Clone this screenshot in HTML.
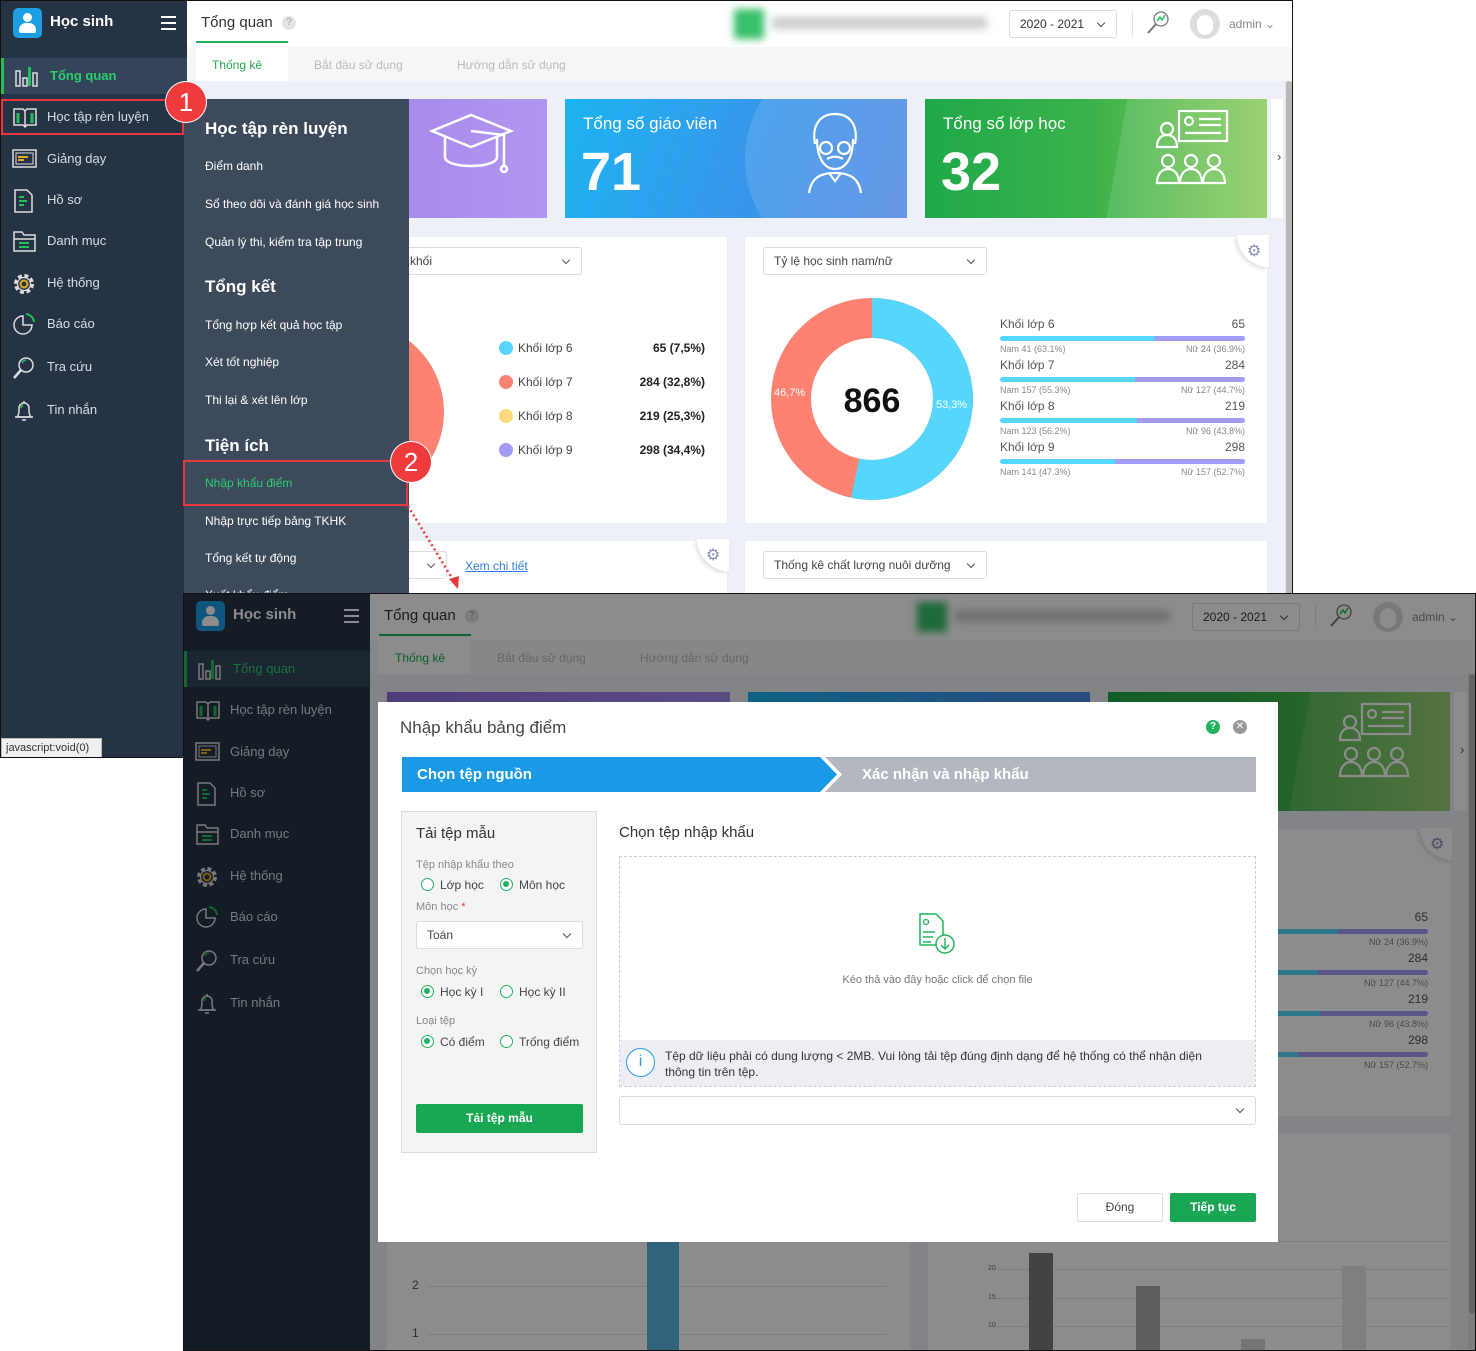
<!DOCTYPE html>
<html><head><meta charset="utf-8">
<style>
*{margin:0;padding:0;box-sizing:border-box}
body{width:1476px;height:1351px;position:relative;overflow:hidden;background:#fff;font-family:"Liberation Sans","DejaVu Sans",sans-serif;color:#333}
.a{position:absolute}
.app{position:absolute;width:1293px;height:758px;overflow:hidden;background:#eef0f7;border:1px solid #111}
.sb{position:absolute;left:0;top:0;width:186px;height:758px;background:#263345}
.sb .it{position:absolute;left:0;width:186px;height:36px;font-size:13px;color:#d8dee6;line-height:36px;padding-left:46px}
.sb .it svg{position:absolute;left:11px;top:7px}
.hdr{position:absolute;left:186px;top:0;width:1107px;height:46px;background:#fff}
.tabs{position:absolute;left:186px;top:46px;width:1107px;height:34px;background:#f6f6f8;font-size:12px;color:#bbb}
.card{position:absolute;top:98px;height:119px;overflow:hidden;color:#fff}
.pan{position:absolute;background:#fff}
.sel{position:absolute;border:1px solid #dcdcdc;border-radius:3px;background:#fff;font-size:12px;color:#444;padding-left:10px;line-height:26px}
.sel:after{content:"";position:absolute;right:12px;top:9px;width:5px;height:5px;border-right:1.5px solid #555;border-bottom:1.5px solid #555;transform:rotate(45deg)}
.fl{position:absolute;left:183px;top:98px;width:225px;height:660px;background:#3d4a5c;color:#fff}
.fl .h{position:absolute;left:21px;font-size:17px;font-weight:bold}
.fl .i{position:absolute;left:21px;font-size:12px}
.badge{position:absolute;width:40px;height:40px;border-radius:50%;background:#ef3b3b;color:#fff;font-size:26px;text-align:center;line-height:40px;box-shadow:0 0 0 1px #fff}
.rad{position:absolute;width:13px;height:13px;border:1.5px solid #22b35e;border-radius:50%;background:#fff}
.rad.on:after{content:"";position:absolute;left:2px;top:2px;width:6px;height:6px;border-radius:50%;background:#22b35e}
.lbl{position:absolute;font-size:12px;color:#444}
.sm{position:absolute;font-size:11px;color:#888}
</style></head><body>

<!-- ================= FRAME 1 ================= -->
<div class="app" style="left:0;top:0">
 <div class="sb">
  <div class="a" style="left:12px;top:7px;width:29px;height:30px;border-radius:5px;background:#1d9de2"><div class="a" style="left:10px;top:5px;width:9px;height:9px;border-radius:50%;background:#fff"></div><div class="a" style="left:6px;top:15px;width:17px;height:10px;border-radius:7px 7px 2px 2px;background:#fff"></div></div>
  <div class="a" style="left:49px;top:12px;font-size:15px;font-weight:bold;color:#fff">Học sinh</div>
  <div class="a" style="left:160px;top:15px;width:15px;height:2px;background:#fff;box-shadow:0 6px 0 #fff,0 12px 0 #fff"></div>
  <div class="it" style="top:57px;background:#34455a;border-left:3px solid #22c05a;color:#2ecc71;font-weight:bold"><svg width="24" height="22"><g fill="none" stroke="#ddd" stroke-width="1.5"><rect x="1" y="6" width="4" height="15"/><rect x="8" y="13" width="4" height="8"/><rect x="18" y="8" width="4" height="13"/></g><rect x="13" y="2" width="3" height="19" fill="#22c05a"/></svg>Tổng quan</div>
  <div class="it" style="top:98px"><svg width="26" height="22"><g fill="none" stroke="#ddd" stroke-width="1.5"><path d="M2 3h9l2 2 2-2h9v16h-9l-2 2-2-2H2z"/><path d="M13 5v16"/></g><path d="M6 7v10M20 7v10" stroke="#22c05a" stroke-width="3"/></svg>Học tập rèn luyện</div>
  <div class="it" style="top:140px"><svg width="26" height="22"><rect x="1" y="2" width="23" height="17" fill="none" stroke="#ddd" stroke-width="1.5"/><rect x="4" y="5" width="17" height="11" fill="none" stroke="#ddd"/><path d="M6 9h10M6 12h6" stroke="#e0b020" stroke-width="2"/></svg>Giảng dạy</div>
  <div class="it" style="top:181px"><svg width="26" height="24"><path d="M3 1h12l5 5v17H3z" fill="none" stroke="#ddd" stroke-width="1.5"/><path d="M7 8h5M7 12h8M7 16h5" stroke="#22c05a" stroke-width="2"/></svg>Hồ sơ</div>
  <div class="it" style="top:222px"><svg width="26" height="22"><path d="M2 2h8l2 3h11v16H2z" fill="none" stroke="#ddd" stroke-width="1.5"/><path d="M2 9h21" stroke="#ddd" stroke-width="1.5"/><path d="M7 13h10M7 17h10" stroke="#22c05a" stroke-width="2"/></svg>Danh mục</div>
  <div class="it" style="top:264px"><svg width="26" height="24"><circle cx="12" cy="12" r="8.5" fill="none" stroke="#ddd" stroke-width="3" stroke-dasharray="4 2.7"/><circle cx="12" cy="12" r="6.5" fill="none" stroke="#ddd" stroke-width="1.2"/><circle cx="12" cy="12" r="3.5" fill="none" stroke="#e0b020" stroke-width="2"/></svg>Hệ thống</div>
  <div class="it" style="top:305px"><svg width="26" height="24"><path d="M11 3a9 9 0 1 0 9 9h-9z" fill="none" stroke="#ddd" stroke-width="1.5"/><path d="M14 1a9 9 0 0 1 8 8" fill="none" stroke="#22c05a" stroke-width="2"/></svg>Báo cáo</div>
  <div class="it" style="top:348px"><svg width="26" height="24"><circle cx="14" cy="9" r="7" fill="none" stroke="#ddd" stroke-width="1.5"/><path d="M9 14l-7 8" stroke="#ddd" stroke-width="2.5"/><path d="M10 7a5 5 0 0 1 4-3" stroke="#22c05a" stroke-width="1.6" fill="none"/></svg>Tra cứu</div>
  <div class="it" style="top:391px"><svg width="26" height="24"><path d="M5 18c2-2 2-5 2-9a5 5 0 0 1 10 0c0 4 0 7 2 9z" fill="none" stroke="#ddd" stroke-width="1.5"/><path d="M3 18h18M10 21h4M12 2v2" stroke="#ddd" stroke-width="1.5"/><path d="M9 9a4 4 0 0 1 2-3" stroke="#22c05a" stroke-width="1.6" fill="none"/></svg>Tin nhắn</div>
  <div class="a" style="left:0;top:737px;width:101px;height:21px;background:#f0f0f0;border:1px solid #bbb;font-size:11px;color:#333;line-height:19px;padding-left:4px">javascript:void(0)</div>
 </div>
 <div class="hdr">
  <div class="a" style="left:14px;top:13px;font-size:15px">Tổng quan</div>
  <div class="a" style="left:95px;top:15px;width:14px;height:14px;border-radius:50%;background:#e4e4e4;color:#999;font-size:10px;text-align:center;line-height:14px">?</div>
  <div class="a" style="left:547px;top:8px;width:30px;height:30px;background:#39c06a;filter:blur(4px)"></div>
  <div class="a" style="left:585px;top:16px;width:215px;height:12px;background:#ccc;filter:blur(4px)"></div>
  <div class="sel" style="left:822px;top:9px;width:108px;height:28px;font-size:12px;color:#333">2020 - 2021</div>
  <div class="a" style="left:945px;top:10px;width:1px;height:26px;background:#e6e6e6"></div>
  <svg class="a" style="left:958px;top:9px" width="26" height="26"><circle cx="16" cy="9" r="7" fill="none" stroke="#777" stroke-width="1.3"/><path d="M11 14l-8 9" stroke="#777" stroke-width="2"/><path d="M12 11l3-4 2 3 3-5" stroke="#22c05a" stroke-width="1.5" fill="none"/></svg>
  <div class="a" style="left:1003px;top:8px;width:30px;height:30px;border-radius:50%;background:#ddd"><div class="a" style="left:7px;top:6px;width:16px;height:20px;border-radius:8px;background:#fff"></div></div>
  <div class="a" style="left:1042px;top:16px;font-size:12px;color:#888">admin ⌄</div>
 </div>
 <div class="tabs">
  <div class="a" style="left:9px;top:-6px;width:92px;height:40px;background:#fff;border-top:2px solid #22b35e"></div>
  <div class="a" style="left:25px;top:11px;color:#22a852">Thống kê</div>
  <div class="a" style="left:127px;top:11px">Bắt đầu sử dụng</div>
  <div class="a" style="left:270px;top:11px">Hướng dẫn sử dụng</div>
 </div>
 <div class="a" style="left:1284px;top:80px;width:8px;height:678px;background:#e4e4e4"><div class="a" style="left:1px;top:0;width:6px;height:640px;border-radius:3px;background:#b9b9b9"></div></div>
 <!-- cards -->
 <div class="card" style="left:203px;width:343px;background:linear-gradient(90deg,#8f6fe0,#a88af0)"><div class="a" style="left:140px;top:-40px;width:250px;height:200px;border-radius:50%;background:rgba(255,255,255,.1)"></div>
  <svg class="a" style="left:225px;top:12px" width="85" height="72"><g fill="none" stroke="#fff" stroke-width="2.5"><path d="M3 20L42 4l40 16-40 16z"/><path d="M16 26v20c0 12 52 12 52 0V26"/><path d="M42 20l33 4v30"/><circle cx="75" cy="58" r="3"/></g></svg></div>
 <div class="card" style="left:564px;width:342px;background:linear-gradient(110deg,#1cb3f2,#3a94e9 60%,#5389e2)"><div class="a" style="left:180px;top:-60px;width:260px;height:240px;border-radius:50%;background:rgba(255,255,255,.12)"></div>
  <div class="a" style="left:18px;top:15px;font-size:17px">Tổng số giáo viên</div><div class="a" style="left:16px;top:42px;font-size:54px;font-weight:bold">71</div>
  <svg class="a" style="left:240px;top:10px" width="60" height="85"><g fill="none" stroke="#fff" stroke-width="2.2"><path d="M10 35c-4-22 8-30 20-30s24 8 20 30"/><path d="M12 30c0 20 8 30 18 30s18-10 18-30"/><circle cx="21" cy="39" r="6"/><circle cx="39" cy="39" r="6"/><path d="M22 50c5-3 11-3 16 0M4 84c2-14 10-20 26-20s24 6 26 20M24 64l6 8 6-8"/></g></svg></div>
 <div class="card" style="left:924px;width:342px;background:linear-gradient(90deg,#1fa84a,#3cb34a 50%,#8dcc60)"><div class="a" style="left:190px;top:-10px;width:200px;height:160px;background:rgba(255,255,255,.12);transform:skewX(-10deg)"></div>
  <div class="a" style="left:18px;top:15px;font-size:17px">Tổng số lớp học</div><div class="a" style="left:16px;top:42px;font-size:54px;font-weight:bold">32</div>
  <svg class="a" style="left:230px;top:10px" width="76" height="76"><g fill="none" stroke="#fff" stroke-width="2.2"><rect x="24" y="2" width="48" height="30"/><circle cx="34" cy="12" r="4"/><path d="M44 10h22M44 16h22M30 24h36"/><circle cx="12" cy="20" r="6"/><path d="M2 38c0-8 4-12 10-12s10 4 10 12z"/><circle cx="13" cy="52" r="6"/><circle cx="36" cy="52" r="6"/><circle cx="59" cy="52" r="6"/><path d="M2 74c0-9 5-14 11-14s11 5 11 14zM25 74c0-9 5-14 11-14s11 5 11 14zM48 74c0-9 5-14 11-14s11 5 11 14z"/></g></svg></div>
 <div class="a" style="left:1270px;top:98px;width:12px;height:119px;background:#fff"></div>
 <div class="a" style="left:1276px;top:148px;font-size:13px;color:#555">›</div>
 <!-- panels -->
 <div class="pan" style="left:203px;top:236px;width:523px;height:286px;overflow:hidden">
  <div class="sel" style="left:195px;top:10px;width:183px;height:28px">khối</div>
  <div class="a" style="left:60px;top:85px;width:180px;height:180px;border-radius:50%;background:#fd8272"></div>
  <div class="a" style="left:295px;top:104px;width:14px;height:14px;border-radius:50%;background:#55d7fd"></div><div class="lbl" style="left:314px;top:104px">Khối lớp 6</div><div class="lbl" style="left:440px;top:104px;width:61px;text-align:right;font-weight:bold;color:#222">65 (7,5%)</div>
  <div class="a" style="left:295px;top:138px;width:14px;height:14px;border-radius:50%;background:#fd8272"></div><div class="lbl" style="left:314px;top:138px">Khối lớp 7</div><div class="lbl" style="left:420px;top:138px;width:81px;text-align:right;font-weight:bold;color:#222">284 (32,8%)</div>
  <div class="a" style="left:295px;top:172px;width:14px;height:14px;border-radius:50%;background:#ffd97a"></div><div class="lbl" style="left:314px;top:172px">Khối lớp 8</div><div class="lbl" style="left:420px;top:172px;width:81px;text-align:right;font-weight:bold;color:#222">219 (25,3%)</div>
  <div class="a" style="left:295px;top:206px;width:14px;height:14px;border-radius:50%;background:#a39cf4"></div><div class="lbl" style="left:314px;top:206px">Khối lớp 9</div><div class="lbl" style="left:420px;top:206px;width:81px;text-align:right;font-weight:bold;color:#222">298 (34,4%)</div>
 </div>
 <div class="pan" style="left:744px;top:236px;width:522px;height:286px">
  <div class="sel" style="left:18px;top:10px;width:224px;height:28px">Tỷ lệ học sinh nam/nữ</div>
  <div class="a" style="left:492px;top:-2px;width:32px;height:32px;border-radius:0 0 0 32px;background:#fff;box-shadow:-2px 2px 4px rgba(0,0,0,.12)"></div>
  <div class="a" style="left:502px;top:4px;font-size:16px;color:#8a8fb5">⚙</div>
  <svg class="a" style="left:26px;top:61px" width="204" height="204"><circle cx="101" cy="101" r="81" fill="none" stroke="#fd8272" stroke-width="40"/><circle cx="101" cy="101" r="81" fill="none" stroke="#55d7fd" stroke-width="40" stroke-dasharray="271.3 600" transform="rotate(-90 101 101)"/><text x="101" y="114" text-anchor="middle" font-size="34" font-weight="bold" fill="#111" font-family="Liberation Sans">866</text><text x="3" y="98" font-size="11" fill="#fff" font-family="Liberation Sans">46,7%</text><text x="165" y="110" font-size="11" fill="#fff" font-family="Liberation Sans">53,3%</text></svg>
  <div class="a" style="left:255px;top:80px;width:245px;font-size:12px;color:#555">
   <div style="height:41px;position:relative"><span>Khối lớp 6</span><span class="a" style="right:0">65</span><div class="a" style="top:19px;left:0;width:245px;height:5px;border-radius:3px;background:linear-gradient(90deg,#55d7fd 63%,#a39cf4 63%)"></div><div class="a" style="top:27px;left:0;width:245px;font-size:9px;color:#888">Nam 41 (63.1%)<span style="float:right">Nữ 24 (36.9%)</span></div></div>
   <div style="height:41px;position:relative"><span>Khối lớp 7</span><span class="a" style="right:0">284</span><div class="a" style="top:19px;left:0;width:245px;height:5px;border-radius:3px;background:linear-gradient(90deg,#55d7fd 55%,#a39cf4 55%)"></div><div class="a" style="top:27px;left:0;width:245px;font-size:9px;color:#888">Nam 157 (55.3%)<span style="float:right">Nữ 127 (44.7%)</span></div></div>
   <div style="height:41px;position:relative"><span>Khối lớp 8</span><span class="a" style="right:0">219</span><div class="a" style="top:19px;left:0;width:245px;height:5px;border-radius:3px;background:linear-gradient(90deg,#55d7fd 56%,#a39cf4 56%)"></div><div class="a" style="top:27px;left:0;width:245px;font-size:9px;color:#888">Nam 123 (56.2%)<span style="float:right">Nữ 96 (43.8%)</span></div></div>
   <div style="height:41px;position:relative"><span>Khối lớp 9</span><span class="a" style="right:0">298</span><div class="a" style="top:19px;left:0;width:245px;height:5px;border-radius:3px;background:linear-gradient(90deg,#55d7fd 47%,#a39cf4 47%)"></div><div class="a" style="top:27px;left:0;width:245px;font-size:9px;color:#888">Nam 141 (47.3%)<span style="float:right">Nữ 157 (52.7%)</span></div></div>
  </div>
 </div>
 <div class="pan" style="left:203px;top:540px;width:523px;height:218px">
  <div class="sel" style="left:40px;top:10px;width:203px;height:28px"></div>
  <div class="a" style="left:261px;top:18px;font-size:12px;color:#2f7de1;text-decoration:underline">Xem chi tiết</div>
  <div class="a" style="left:493px;top:-2px;width:32px;height:32px;border-radius:0 0 0 32px;background:#fff;box-shadow:-2px 2px 4px rgba(0,0,0,.12)"></div>
  <div class="a" style="left:502px;top:4px;font-size:16px;color:#8a8fb5">⚙</div>
  <div class="a" style="left:25px;top:144px;font-size:12px;color:#555">2</div><div class="a" style="left:25px;top:192px;font-size:12px;color:#555">1</div>
  <div class="a" style="left:40px;top:104px;width:460px;height:1px;background:#e5e5e5"></div><div class="a" style="left:40px;top:152px;width:460px;height:1px;background:#e5e5e5"></div><div class="a" style="left:40px;top:200px;width:460px;height:1px;background:#e5e5e5"></div>
  <div class="a" style="left:260px;top:100px;width:32px;height:118px;background:#5ab6de"></div>
 </div>
 <div class="pan" style="left:744px;top:540px;width:522px;height:218px">
  <div class="sel" style="left:18px;top:10px;width:224px;height:28px">Thống kê chất lượng nuôi dưỡng</div>
  <div class="a" style="left:65px;top:107px;width:455px;height:1px;background:#e5e5e5"></div><div class="a" style="left:65px;top:135px;width:455px;height:1px;background:#e5e5e5"></div><div class="a" style="left:65px;top:164px;width:455px;height:1px;background:#e5e5e5"></div><div class="a" style="left:65px;top:192px;width:455px;height:1px;background:#e5e5e5"></div>
  <div class="a" style="left:60px;top:103px;font-size:7px;color:#777">25</div><div class="a" style="left:60px;top:131px;font-size:7px;color:#777">20</div><div class="a" style="left:60px;top:160px;font-size:7px;color:#777">15</div><div class="a" style="left:60px;top:188px;font-size:7px;color:#777">10</div>
  <div class="a" style="left:101px;top:119px;width:24px;height:100px;background:#7a7a7a"></div>
  <div class="a" style="left:208px;top:152px;width:24px;height:70px;background:#aaa"></div>
  <div class="a" style="left:313px;top:205px;width:24px;height:20px;background:#d6d6d6"></div>
  <div class="a" style="left:414px;top:132px;width:24px;height:90px;background:#e3e8ea"></div>
 </div>
 <!-- flyout -->
 <div class="fl">
  <div class="h" style="top:20px">Học tập rèn luyện</div>
  <div class="i" style="top:60px">Điểm danh</div>
  <div class="i" style="top:98px">Sổ theo dõi và đánh giá học sinh</div>
  <div class="i" style="top:136px">Quản lý thi, kiểm tra tập trung</div>
  <div class="h" style="top:178px">Tổng kết</div>
  <div class="i" style="top:219px">Tổng hợp kết quả học tập</div>
  <div class="i" style="top:256px">Xét tốt nghiệp</div>
  <div class="i" style="top:294px">Thi lại &amp; xét lên lớp</div>
  <div class="h" style="top:337px">Tiện ích</div>
  <div class="i" style="top:377px;color:#2ecc71">Nhập khẩu điểm</div>
  <div class="i" style="top:415px">Nhập trực tiếp bảng TKHK</div>
  <div class="i" style="top:452px">Tổng kết tự động</div>
  <div class="i" style="top:489px">Xuất khẩu điểm</div>
 </div>
 <div class="a" style="left:0;top:98px;width:183px;height:36px;border:2px solid #e8383d"></div>
 <div class="a" style="left:182px;top:459px;width:225px;height:46px;border:2px solid #e8383d"></div>
 <div class="badge" style="left:165px;top:81px">1</div>
 <div class="badge" style="left:390px;top:441px">2</div>
 <svg class="a" style="left:404px;top:502px" width="60" height="90"><path d="M3 3L50 80" stroke="#e8383d" stroke-width="2.5" stroke-dasharray="2 3"/><path d="M44 76l9 10 1-13z" fill="#e8383d"/></svg>
</div>

<!-- ================= FRAME 2 ================= -->
<div class="app" style="left:183px;top:593px">
 <div class="sb">
  <div class="a" style="left:12px;top:7px;width:29px;height:30px;border-radius:5px;background:#1d9de2"><div class="a" style="left:10px;top:5px;width:9px;height:9px;border-radius:50%;background:#fff"></div><div class="a" style="left:6px;top:15px;width:17px;height:10px;border-radius:7px 7px 2px 2px;background:#fff"></div></div>
  <div class="a" style="left:49px;top:12px;font-size:15px;font-weight:bold;color:#fff">Học sinh</div>
  <div class="a" style="left:160px;top:15px;width:15px;height:2px;background:#fff;box-shadow:0 6px 0 #fff,0 12px 0 #fff"></div>
  <div class="it" style="top:57px;background:#34455a;border-left:3px solid #22c05a;color:#2ecc71"><svg width="24" height="22"><g fill="none" stroke="#ddd" stroke-width="1.5"><rect x="1" y="6" width="4" height="15"/><rect x="8" y="13" width="4" height="8"/><rect x="18" y="8" width="4" height="13"/></g><rect x="13" y="2" width="3" height="19" fill="#22c05a"/></svg>Tổng quan</div>
  <div class="it" style="top:98px"><svg width="26" height="22"><g fill="none" stroke="#ddd" stroke-width="1.5"><path d="M2 3h9l2 2 2-2h9v16h-9l-2 2-2-2H2z"/><path d="M13 5v16"/></g><path d="M6 7v10M20 7v10" stroke="#22c05a" stroke-width="3"/></svg>Học tập rèn luyện</div>
  <div class="it" style="top:140px"><svg width="26" height="22"><rect x="1" y="2" width="23" height="17" fill="none" stroke="#ddd" stroke-width="1.5"/><rect x="4" y="5" width="17" height="11" fill="none" stroke="#ddd"/><path d="M6 9h10M6 12h6" stroke="#e0b020" stroke-width="2"/></svg>Giảng dạy</div>
  <div class="it" style="top:181px"><svg width="26" height="24"><path d="M3 1h12l5 5v17H3z" fill="none" stroke="#ddd" stroke-width="1.5"/><path d="M7 8h5M7 12h8M7 16h5" stroke="#22c05a" stroke-width="2"/></svg>Hồ sơ</div>
  <div class="it" style="top:222px"><svg width="26" height="22"><path d="M2 2h8l2 3h11v16H2z" fill="none" stroke="#ddd" stroke-width="1.5"/><path d="M2 9h21" stroke="#ddd" stroke-width="1.5"/><path d="M7 13h10M7 17h10" stroke="#22c05a" stroke-width="2"/></svg>Danh mục</div>
  <div class="it" style="top:264px"><svg width="26" height="24"><circle cx="12" cy="12" r="8.5" fill="none" stroke="#ddd" stroke-width="3" stroke-dasharray="4 2.7"/><circle cx="12" cy="12" r="6.5" fill="none" stroke="#ddd" stroke-width="1.2"/><circle cx="12" cy="12" r="3.5" fill="none" stroke="#e0b020" stroke-width="2"/></svg>Hệ thống</div>
  <div class="it" style="top:305px"><svg width="26" height="24"><path d="M11 3a9 9 0 1 0 9 9h-9z" fill="none" stroke="#ddd" stroke-width="1.5"/><path d="M14 1a9 9 0 0 1 8 8" fill="none" stroke="#22c05a" stroke-width="2"/></svg>Báo cáo</div>
  <div class="it" style="top:348px"><svg width="26" height="24"><circle cx="14" cy="9" r="7" fill="none" stroke="#ddd" stroke-width="1.5"/><path d="M9 14l-7 8" stroke="#ddd" stroke-width="2.5"/><path d="M10 7a5 5 0 0 1 4-3" stroke="#22c05a" stroke-width="1.6" fill="none"/></svg>Tra cứu</div>
  <div class="it" style="top:391px"><svg width="26" height="24"><path d="M5 18c2-2 2-5 2-9a5 5 0 0 1 10 0c0 4 0 7 2 9z" fill="none" stroke="#ddd" stroke-width="1.5"/><path d="M3 18h18M10 21h4M12 2v2" stroke="#ddd" stroke-width="1.5"/><path d="M9 9a4 4 0 0 1 2-3" stroke="#22c05a" stroke-width="1.6" fill="none"/></svg>Tin nhắn</div>
 </div>
 <div class="hdr">
  <div class="a" style="left:14px;top:13px;font-size:15px">Tổng quan</div>
  <div class="a" style="left:95px;top:15px;width:14px;height:14px;border-radius:50%;background:#e4e4e4;color:#999;font-size:10px;text-align:center;line-height:14px">?</div>
  <div class="a" style="left:547px;top:8px;width:30px;height:30px;background:#39c06a;filter:blur(4px)"></div>
  <div class="a" style="left:585px;top:16px;width:215px;height:12px;background:#ccc;filter:blur(4px)"></div>
  <div class="sel" style="left:822px;top:9px;width:108px;height:28px;font-size:12px;color:#333">2020 - 2021</div>
  <div class="a" style="left:945px;top:10px;width:1px;height:26px;background:#e6e6e6"></div>
  <svg class="a" style="left:958px;top:9px" width="26" height="26"><circle cx="16" cy="9" r="7" fill="none" stroke="#777" stroke-width="1.3"/><path d="M11 14l-8 9" stroke="#777" stroke-width="2"/><path d="M12 11l3-4 2 3 3-5" stroke="#22c05a" stroke-width="1.5" fill="none"/></svg>
  <div class="a" style="left:1003px;top:8px;width:30px;height:30px;border-radius:50%;background:#ddd"><div class="a" style="left:7px;top:6px;width:16px;height:20px;border-radius:8px;background:#fff"></div></div>
  <div class="a" style="left:1042px;top:16px;font-size:12px;color:#888">admin ⌄</div>
 </div>
 <div class="tabs">
  <div class="a" style="left:9px;top:-6px;width:92px;height:40px;background:#fff;border-top:2px solid #22b35e"></div>
  <div class="a" style="left:25px;top:11px;color:#22a852">Thống kê</div>
  <div class="a" style="left:127px;top:11px">Bắt đầu sử dụng</div>
  <div class="a" style="left:270px;top:11px">Hướng dẫn sử dụng</div>
 </div>
 <div class="a" style="left:1284px;top:80px;width:8px;height:678px;background:#e4e4e4"><div class="a" style="left:1px;top:0;width:6px;height:640px;border-radius:3px;background:#b9b9b9"></div></div>
 <div class="card" style="left:203px;width:343px;background:linear-gradient(90deg,#8f6fe0,#a88af0)"></div>
 <div class="card" style="left:564px;width:342px;background:linear-gradient(110deg,#1cb3f2,#3a94e9 60%,#5389e2)"></div>
 <div class="card" style="left:924px;width:342px;background:linear-gradient(90deg,#1fa84a,#3cb34a 50%,#8dcc60)"><div class="a" style="left:190px;top:-10px;width:200px;height:160px;background:rgba(255,255,255,.12);transform:skewX(-10deg)"></div>
  <svg class="a" style="left:230px;top:10px" width="76" height="76"><g fill="none" stroke="#fff" stroke-width="2.2"><rect x="24" y="2" width="48" height="30"/><circle cx="34" cy="12" r="4"/><path d="M44 10h22M44 16h22M30 24h36"/><circle cx="12" cy="20" r="6"/><path d="M2 38c0-8 4-12 10-12s10 4 10 12z"/><circle cx="13" cy="52" r="6"/><circle cx="36" cy="52" r="6"/><circle cx="59" cy="52" r="6"/><path d="M2 74c0-9 5-14 11-14s11 5 11 14zM25 74c0-9 5-14 11-14s11 5 11 14zM48 74c0-9 5-14 11-14s11 5 11 14z"/></g></svg></div>
 <div class="a" style="left:1270px;top:98px;width:12px;height:119px;background:#fff"></div>
 <div class="a" style="left:1276px;top:148px;font-size:13px;color:#555">›</div>
 <div class="pan" style="left:203px;top:236px;width:523px;height:286px"></div>
 <div class="pan" style="left:744px;top:236px;width:522px;height:286px">
  <div class="a" style="left:492px;top:-2px;width:32px;height:32px;border-radius:0 0 0 32px;background:#fff;box-shadow:-2px 2px 4px rgba(0,0,0,.12)"></div>
  <div class="a" style="left:502px;top:4px;font-size:16px;color:#8a8fb5">⚙</div>
  <div class="a" style="left:255px;top:80px;width:245px;font-size:12px;color:#555">
   <div style="height:41px;position:relative"><span>Khối lớp 6</span><span class="a" style="right:0">65</span><div class="a" style="top:19px;left:0;width:245px;height:5px;border-radius:3px;background:linear-gradient(90deg,#55d7fd 63%,#a39cf4 63%)"></div><div class="a" style="top:27px;left:0;width:245px;font-size:9px;color:#888">Nam 41 (63.1%)<span style="float:right">Nữ 24 (36.9%)</span></div></div>
   <div style="height:41px;position:relative"><span>Khối lớp 7</span><span class="a" style="right:0">284</span><div class="a" style="top:19px;left:0;width:245px;height:5px;border-radius:3px;background:linear-gradient(90deg,#55d7fd 55%,#a39cf4 55%)"></div><div class="a" style="top:27px;left:0;width:245px;font-size:9px;color:#888">Nam 157 (55.3%)<span style="float:right">Nữ 127 (44.7%)</span></div></div>
   <div style="height:41px;position:relative"><span>Khối lớp 8</span><span class="a" style="right:0">219</span><div class="a" style="top:19px;left:0;width:245px;height:5px;border-radius:3px;background:linear-gradient(90deg,#55d7fd 56%,#a39cf4 56%)"></div><div class="a" style="top:27px;left:0;width:245px;font-size:9px;color:#888">Nam 123 (56.2%)<span style="float:right">Nữ 96 (43.8%)</span></div></div>
   <div style="height:41px;position:relative"><span>Khối lớp 9</span><span class="a" style="right:0">298</span><div class="a" style="top:19px;left:0;width:245px;height:5px;border-radius:3px;background:linear-gradient(90deg,#55d7fd 47%,#a39cf4 47%)"></div><div class="a" style="top:27px;left:0;width:245px;font-size:9px;color:#888">Nam 141 (47.3%)<span style="float:right">Nữ 157 (52.7%)</span></div></div>
  </div>
 </div>
 <div class="pan" style="left:203px;top:540px;width:523px;height:218px">
  <div class="a" style="left:25px;top:144px;font-size:12px;color:#555">2</div><div class="a" style="left:25px;top:192px;font-size:12px;color:#555">1</div>
  <div class="a" style="left:40px;top:104px;width:460px;height:1px;background:#e5e5e5"></div><div class="a" style="left:40px;top:152px;width:460px;height:1px;background:#e5e5e5"></div><div class="a" style="left:40px;top:200px;width:460px;height:1px;background:#e5e5e5"></div>
  <div class="a" style="left:260px;top:100px;width:32px;height:118px;background:#5ab6de"></div>
 </div>
 <div class="pan" style="left:744px;top:540px;width:522px;height:218px">
  <div class="a" style="left:65px;top:107px;width:455px;height:1px;background:#e5e5e5"></div><div class="a" style="left:65px;top:135px;width:455px;height:1px;background:#e5e5e5"></div><div class="a" style="left:65px;top:164px;width:455px;height:1px;background:#e5e5e5"></div><div class="a" style="left:65px;top:192px;width:455px;height:1px;background:#e5e5e5"></div>
  <div class="a" style="left:60px;top:103px;font-size:7px;color:#777">25</div><div class="a" style="left:60px;top:131px;font-size:7px;color:#777">20</div><div class="a" style="left:60px;top:160px;font-size:7px;color:#777">15</div><div class="a" style="left:60px;top:188px;font-size:7px;color:#777">10</div>
  <div class="a" style="left:101px;top:119px;width:24px;height:100px;background:#7a7a7a"></div>
  <div class="a" style="left:208px;top:152px;width:24px;height:70px;background:#aaa"></div>
  <div class="a" style="left:313px;top:205px;width:24px;height:20px;background:#d6d6d6"></div>
  <div class="a" style="left:414px;top:132px;width:24px;height:90px;background:#e3e8ea"></div>
 </div>
 <div class="a" style="left:0;top:0;width:1293px;height:758px;background:rgba(0,0,0,.45)"></div>
</div>

<!-- ================= MODAL ================= -->
<div class="a" style="left:378px;top:702px;width:900px;height:540px;background:#fff">
 <div class="a" style="left:22px;top:16px;font-size:17px;color:#444">Nhập khẩu bảng điểm</div>
 <div class="a" style="left:828px;top:18px;width:14px;height:14px;border-radius:50%;background:#22b35e;color:#fff;font-size:10px;font-weight:bold;text-align:center;line-height:14px">?</div>
 <div class="a" style="left:855px;top:18px;width:14px;height:14px;border-radius:50%;background:#999;color:#fff;font-size:10px;text-align:center;line-height:14px">✕</div>
 <div class="a" style="left:24px;top:55px;width:854px;height:35px;background:#b3b7c0"></div>
 <svg class="a" style="left:24px;top:55px" width="440" height="35"><path d="M0 0H423L440 17.5 423 35H0z" fill="#fff"/><path d="M0 0H418L435 17.5 418 35H0z" fill="#1a9ae6"/></svg>
 <div class="a" style="left:39px;top:64px;font-size:15px;font-weight:bold;color:#fff">Chọn tệp nguồn</div>
 <div class="a" style="left:484px;top:64px;font-size:15px;font-weight:bold;color:#fff">Xác nhận và nhập khẩu</div>
 <div class="a" style="left:23px;top:109px;width:196px;height:342px;background:#f4f4f4;border:1px solid #ddd"></div>
 <div class="a" style="left:38px;top:123px;font-size:15px;color:#333">Tải tệp mẫu</div>
 <div class="sm" style="left:38px;top:157px">Tệp nhập khẩu theo</div>
 <div class="rad" style="left:43px;top:176px"></div><div class="lbl" style="left:62px;top:176px">Lớp học</div>
 <div class="rad on" style="left:122px;top:176px"></div><div class="lbl" style="left:141px;top:176px">Môn học</div>
 <div class="sm" style="left:38px;top:199px">Môn học <span style="color:#e33">*</span></div>
 <div class="sel" style="left:38px;top:219px;width:167px;height:28px;font-size:12px">Toán</div>
 <div class="sm" style="left:38px;top:263px">Chọn học kỳ</div>
 <div class="rad on" style="left:43px;top:283px"></div><div class="lbl" style="left:62px;top:283px">Học kỳ I</div>
 <div class="rad" style="left:122px;top:283px"></div><div class="lbl" style="left:141px;top:283px">Học kỳ II</div>
 <div class="sm" style="left:38px;top:313px">Loại tệp</div>
 <div class="rad on" style="left:43px;top:333px"></div><div class="lbl" style="left:62px;top:333px">Có điểm</div>
 <div class="rad" style="left:122px;top:333px"></div><div class="lbl" style="left:141px;top:333px">Trống điểm</div>
 <div class="a" style="left:38px;top:402px;width:167px;height:29px;background:#1aa753;border-radius:2px;color:#fff;font-size:12px;font-weight:bold;text-align:center;line-height:29px">Tải tệp mẫu</div>
 <div class="a" style="left:241px;top:122px;font-size:15px;color:#333">Chọn tệp nhập khẩu</div>
 <div class="a" style="left:241px;top:154px;width:637px;height:231px;border:1px dashed #ccc"></div>
 <svg class="a" style="left:540px;top:210px" width="40" height="45"><path d="M2 2h16l7 7v24H2z" fill="none" stroke="#22b35e" stroke-width="1.5"/><circle cx="8" cy="10" r="2.5" fill="none" stroke="#22b35e" stroke-width="1.3"/><path d="M5 20h12M5 25h10M5 30h8" stroke="#22b35e" stroke-width="1.5"/><circle cx="27" cy="32" r="9" fill="#fff" stroke="#22b35e" stroke-width="1.5"/><path d="M27 26v11M23 33l4 4 4-4" fill="none" stroke="#22b35e" stroke-width="1.4"/></svg>
 <div class="a" style="left:241px;top:272px;width:637px;text-align:center;font-size:11px;color:#777">Kéo thả vào đây hoặc click để chọn file</div>
 <div class="a" style="left:242px;top:338px;width:635px;height:46px;background:#eceef3"></div>
 <div class="a" style="left:248px;top:346px;width:29px;height:29px;border-radius:50%;border:1.5px solid #2a9be6;color:#2a9be6;font-size:16px;text-align:center;line-height:26px;background:#fff">i</div>
 <div class="a" style="left:287px;top:346px;width:570px;font-size:12px;color:#333;line-height:16px">Tệp dữ liệu phải có dung lượng &lt; 2MB. Vui lòng tải tệp đúng định dạng để hệ thống có thể nhận diện thông tin trên tệp.</div>
 <div class="sel" style="left:241px;top:394px;width:637px;height:29px"></div>
 <div class="a" style="left:699px;top:491px;width:86px;height:29px;border:1px solid #ddd;border-radius:2px;font-size:12px;color:#444;text-align:center;line-height:27px">Đóng</div>
 <div class="a" style="left:792px;top:491px;width:86px;height:29px;background:#1aa753;border-radius:2px;font-size:12px;font-weight:bold;color:#fff;text-align:center;line-height:29px">Tiếp tục</div>
</div>
</body></html>
